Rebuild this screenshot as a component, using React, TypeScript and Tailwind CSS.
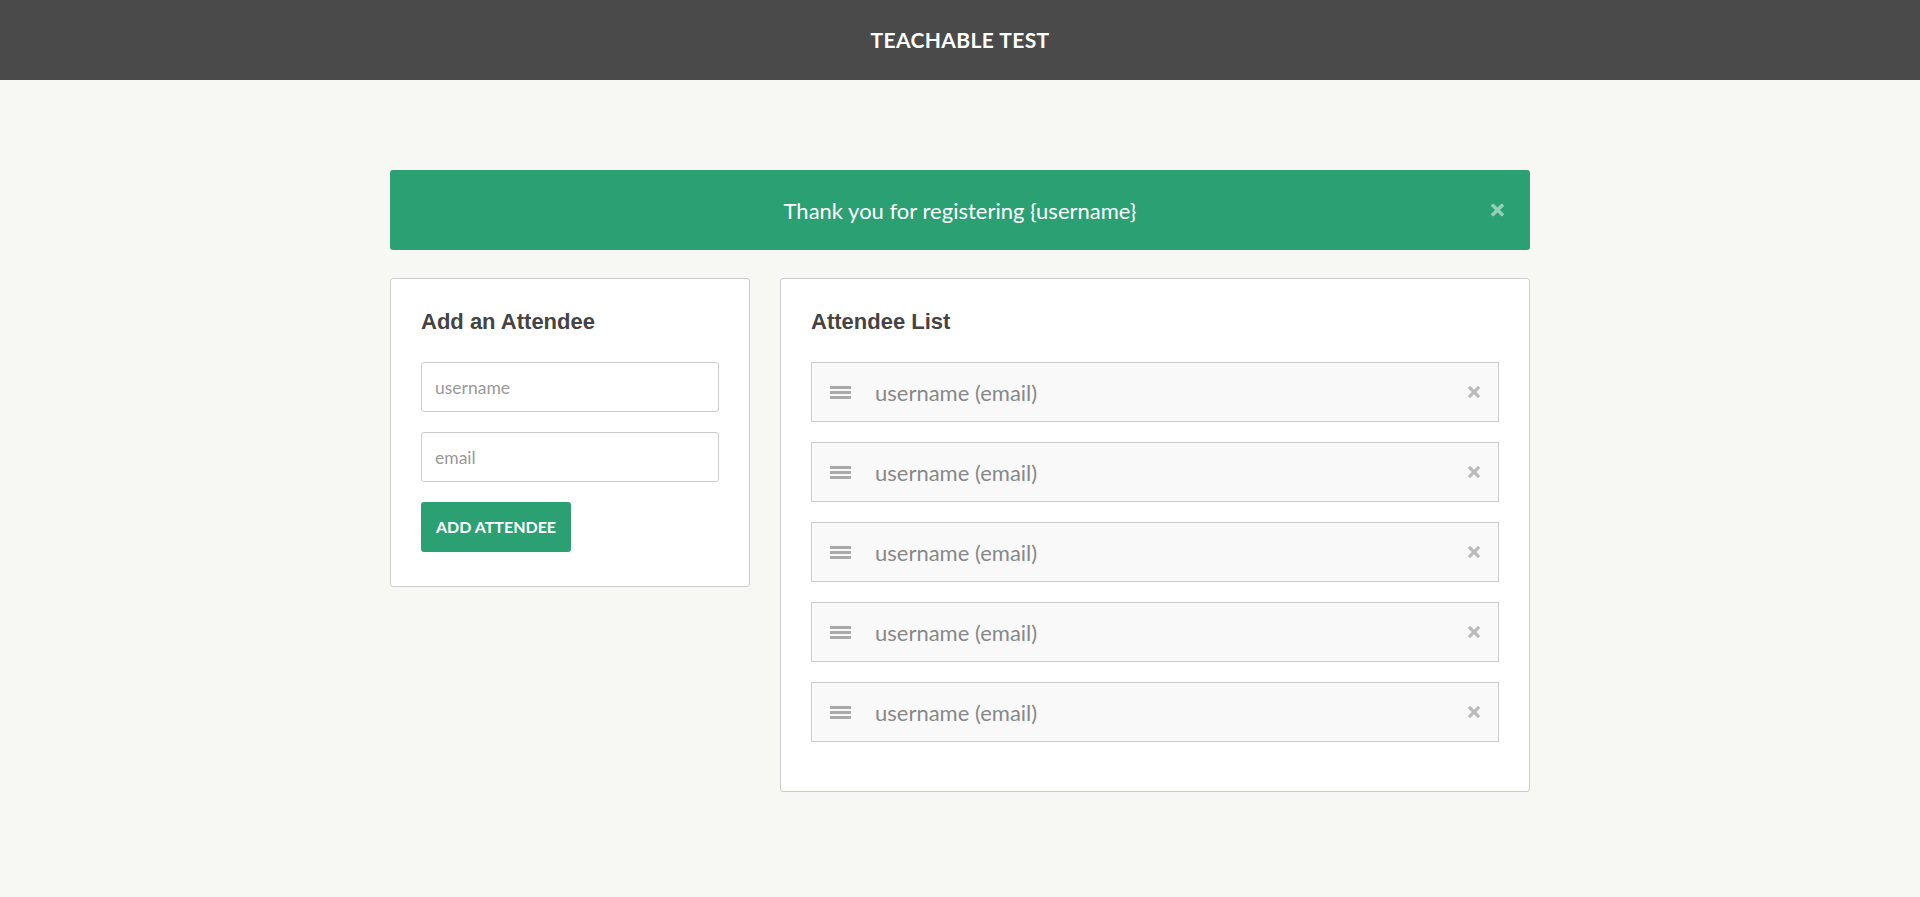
const sans = "font-['Lato','Open_Sans',sans-serif]"

function CloseIcon({ className }: { className?: string }) {
  return (
    <svg viewBox="0 0 12 12" className={className} aria-hidden="true">
      <path d="M2 2 L10 10 M10 2 L2 10" stroke="currentColor" strokeWidth="3.2" strokeLinecap="square" fill="none" />
    </svg>
  )
}

function DragHandle() {
  return (
    <div className="flex w-[21px] shrink-0 flex-col gap-[2px]">
      <span className="h-[3px] bg-[#aaaaaa]"></span>
      <span className="h-[3px] bg-[#aaaaaa]"></span>
      <span className="h-[3px] bg-[#aaaaaa]"></span>
    </div>
  )
}

const attendees = [1, 2, 3, 4, 5]

export default function App() {
  return (
    <div className={`min-h-screen bg-[#f7f7f3] ${sans}`}>
      {/* header */}
      <header className="flex h-[80px] items-center justify-center bg-[#4a4a4a]">
        <h1 className="text-[21px] font-bold tracking-[0.4px] text-white">TEACHABLE TEST</h1>
      </header>

      <main className="mx-auto w-[1140px] pt-[90px] pb-[60px]">
        {/* alert */}
        <div className="relative flex h-[80px] items-center justify-center rounded-[3px] bg-[#2aa073]">
          <p className="text-[22px] text-white">Thank you for registering {'{username}'}</p>
          <button className="absolute right-[26px] top-1/2 -translate-y-1/2 text-white/50">
            <CloseIcon className="h-[13px] w-[13px]" />
          </button>
        </div>

        <div className="mt-[28px] grid grid-cols-[360px_750px] items-start gap-[30px]">
          {/* add attendee */}
          <div className="rounded-[3px] border border-[#cccccc] bg-white px-[30px] pt-[30px] pb-[34px]">
            <h2 className="mb-[27px] font-['Liberation_Sans',Arial,sans-serif] text-[22px] leading-[26px] font-bold text-[#444444]">
              Add an Attendee
            </h2>
            <div className="flex flex-col gap-[20px]">
              <input
                placeholder="username"
                className="h-[50px] w-full rounded-[3px] border border-[#cccccc] bg-white px-[13px] text-[17.5px] text-[#444] outline-none placeholder:text-[#999999]"
              />
              <input
                placeholder="email"
                className="h-[50px] w-full rounded-[3px] border border-[#cccccc] bg-white px-[13px] text-[17.5px] text-[#444] outline-none placeholder:text-[#999999]"
              />
              <div>
                <button className="h-[50px] w-[150px] rounded-[3px] bg-[#2aa073] text-[16px] font-bold text-white">
                  ADD ATTENDEE
                </button>
              </div>
            </div>
          </div>

          {/* attendee list */}
          <div className="rounded-[3px] border border-[#cccccc] bg-white px-[30px] pt-[30px] pb-[49px]">
            <h2 className="mb-[27px] font-['Liberation_Sans',Arial,sans-serif] text-[22px] leading-[26px] font-bold text-[#444444]">
              Attendee List
            </h2>
            <ul className="flex flex-col gap-[20px]">
              {attendees.map((n) => (
                <li
                  key={n}
                  className="flex h-[60px] items-center border border-[#cccccc] bg-[#f9f9f9] pr-[18px] pl-[18px]"
                >
                  <DragHandle />
                  <span className="ml-[24px] flex-1 text-[22px] text-[#888888]">username (email)</span>
                  <button className="text-[#bbbbbb]">
                    <CloseIcon className="h-[12px] w-[12px]" />
                  </button>
                </li>
              ))}
            </ul>
          </div>
        </div>
      </main>
    </div>
  )
}
